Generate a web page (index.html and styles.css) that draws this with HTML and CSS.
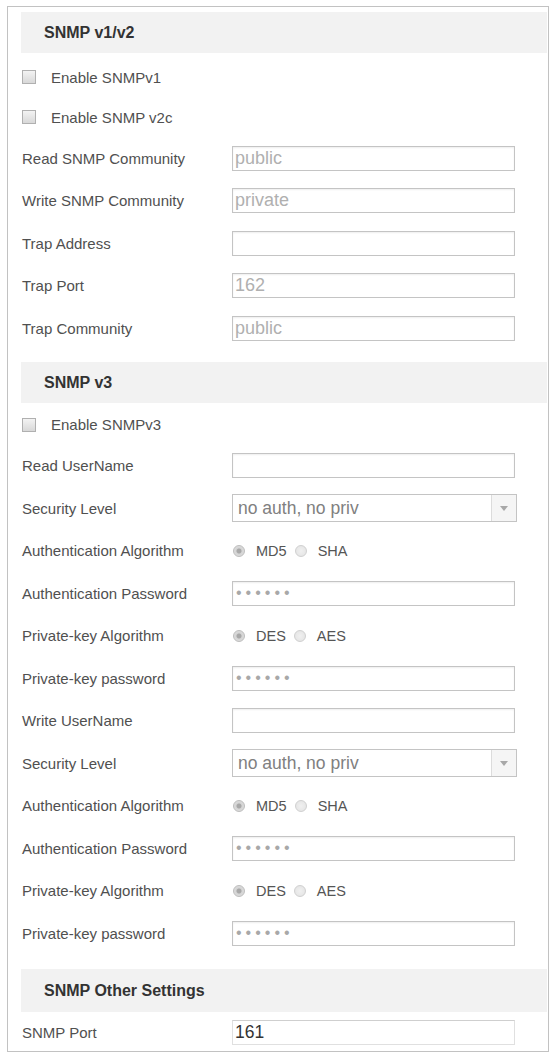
FILE: index.html
```html
<!DOCTYPE html>
<html lang="en">
<head>
    <meta charset="UTF-8">
    <meta name="viewport" content="width=device-width, initial-scale=1.0">
    <title>SNMP Settings</title>
    <link rel="stylesheet" href="styles.css">
</head>
<body>
    <div class="panel">
        <div class="section-title first">SNMP v1/v2</div>
        <div class="checks">
            <label class="check-row"><input type="checkbox" class="check"><span>Enable SNMPv1</span></label>
            <label class="check-row"><input type="checkbox" class="check"><span>Enable SNMP v2c</span></label>
        </div>
        <div class="field-row">
            <span class="label">Read SNMP Community</span>
            <input class="text muted" type="text" value="public">
        </div>
        <div class="field-row">
            <span class="label">Write SNMP Community</span>
            <input class="text muted" type="text" value="private">
        </div>
        <div class="field-row">
            <span class="label">Trap Address</span>
            <input class="text" type="text" value="">
        </div>
        <div class="field-row">
            <span class="label">Trap Port</span>
            <input class="text muted" type="text" value="162">
        </div>
        <div class="field-row">
            <span class="label">Trap Community</span>
            <input class="text muted" type="text" value="public">
        </div>

        <div class="section-title">SNMP v3</div>
        <div class="checks v3">
            <label class="check-row"><input type="checkbox" class="check"><span>Enable SNMPv3</span></label>
        </div>
        <div class="field-row">
            <span class="label">Read UserName</span>
            <input class="text" type="text" value="">
        </div>
        <div class="field-row">
            <span class="label">Security Level</span>
            <div class="select">
                <span class="select-value">no auth, no priv</span>
                <span class="select-arrow"><svg width="8" height="5" viewBox="0 0 8 5"><path d="M0 0h8L4 5z" fill="#a8a8a8"/></svg></span>
            </div>
        </div>
        <div class="field-row">
            <span class="label">Authentication Algorithm</span>
            <div class="radios">
                <input type="radio" class="radio" name="auth1" checked><span class="radio-text">MD5</span>
                <input type="radio" class="radio" name="auth1"><span class="radio-text">SHA</span>
            </div>
        </div>
        <div class="field-row">
            <span class="label">Authentication Password</span>
            <input class="text pass" type="password" value="123456">
        </div>
        <div class="field-row">
            <span class="label">Private-key Algorithm</span>
            <div class="radios">
                <input type="radio" class="radio" name="priv1" checked><span class="radio-text">DES</span>
                <input type="radio" class="radio" name="priv1"><span class="radio-text">AES</span>
            </div>
        </div>
        <div class="field-row">
            <span class="label">Private-key password</span>
            <input class="text pass" type="password" value="123456">
        </div>
        <div class="field-row">
            <span class="label">Write UserName</span>
            <input class="text" type="text" value="">
        </div>
        <div class="field-row">
            <span class="label">Security Level</span>
            <div class="select">
                <span class="select-value">no auth, no priv</span>
                <span class="select-arrow"><svg width="8" height="5" viewBox="0 0 8 5"><path d="M0 0h8L4 5z" fill="#a8a8a8"/></svg></span>
            </div>
        </div>
        <div class="field-row">
            <span class="label">Authentication Algorithm</span>
            <div class="radios">
                <input type="radio" class="radio" name="auth2" checked><span class="radio-text">MD5</span>
                <input type="radio" class="radio" name="auth2"><span class="radio-text">SHA</span>
            </div>
        </div>
        <div class="field-row">
            <span class="label">Authentication Password</span>
            <input class="text pass" type="password" value="123456">
        </div>
        <div class="field-row">
            <span class="label">Private-key Algorithm</span>
            <div class="radios">
                <input type="radio" class="radio" name="priv2" checked><span class="radio-text">DES</span>
                <input type="radio" class="radio" name="priv2"><span class="radio-text">AES</span>
            </div>
        </div>
        <div class="field-row">
            <span class="label">Private-key password</span>
            <input class="text pass" type="password" value="123456">
        </div>

        <div class="section-title other">SNMP Other Settings</div>
        <div class="field-row port-row">
            <span class="label">SNMP Port</span>
            <input class="text port" type="text" value="161">
        </div>
    </div>
</body>
</html>
```

FILE: styles.css
```css
body {
    margin: 0;
    padding: 6px 7px 0;
    background-color: #fff;
    font-family: "Liberation Sans", Arial, sans-serif;
    color: #4a4a4a;
}
.panel {
    border: 1px solid #c2c2c2;
    padding: 5px 1px 0 13px;
}
.section-title {
    height: 41px;
    line-height: 41px;
    padding-left: 23px;
    margin-top: 12px;
    background-color: #f2f2f2;
    font-size: 16px;
    font-weight: bold;
    color: #333;
}
.section-title.first {
    margin-top: 0;
}
.section-title.other {
    margin-top: 14px;
    height: 43px;
    line-height: 43px;
}
.checks {
    padding-top: 4px;
}
.checks.v3 {
    padding-top: 2px;
}
.check-row {
    display: flex;
    align-items: center;
    gap: 15px;
    height: 40px;
    padding-left: 1px;
    font-size: 15px;
    color: #505050;
}
.check {
    appearance: none;
    margin: 0;
    width: 14px;
    height: 14px;
    border: 1px solid #b0b0b0;
    background: linear-gradient(#f3f3f3, #d8d8d8);
}
.field-row {
    display: grid;
    grid-template-columns: 210px 285px;
    align-items: center;
    height: 42.5px;
    padding-left: 1px;
}
.label {
    font-size: 15px;
    color: #505050;
    white-space: nowrap;
}
.text {
    box-sizing: border-box;
    width: 283px;
    height: 25px;
    margin: 0;
    padding: 0 2px;
    border: 1px solid #c4c4c4;
    box-shadow: inset 0 1px 2px rgba(0, 0, 0, 0.07);
    background-color: #fff;
    font-family: "Liberation Sans", Arial, sans-serif;
    font-size: 18px;
    color: #555;
    outline: none;
}
.text.muted {
    color: #b0b0b0;
}
.text.pass {
    font-size: 16px;
    letter-spacing: 4px;
    color: #a8a8a8;
    padding-left: 3px;
}
.select {
    box-sizing: border-box;
    display: flex;
    width: 285px;
    height: 28px;
    border: 1px solid #c4c4c4;
    background-color: #fff;
}
.select-value {
    flex: 1;
    padding-left: 5px;
    line-height: 26px;
    font-size: 17.5px;
    color: #808080;
}
.select-arrow {
    display: flex;
    align-items: center;
    justify-content: center;
    width: 24px;
    border-left: 1px solid #dcdcdc;
    background-color: #f5f5f5;
}
.radios {
    display: flex;
    align-items: center;
    padding-left: 1px;
}
.radio {
    appearance: none;
    margin: 0 11px 0 0;
    width: 12px;
    height: 12px;
    border-radius: 50%;
    border: 1px solid #d0d0d0;
    background: radial-gradient(circle, #f0f0f0 0, #e2e2e2 100%);
}
.radio:checked {
    background: radial-gradient(circle, #a8a8a8 0, #a8a8a8 2px, #d4d4d4 3px, #e2e2e2 100%);
    border-color: #bdbdbd;
}
.radio-text {
    font-size: 14.5px;
    color: #555;
    margin-right: 8px;
}
.port-row {
    height: 36px;
    padding-top: 3px;
}
.text.port {
    border-color: #e0e0e0;
    border-top-color: #cfcfcf;
    box-shadow: none;
    font-size: 17.5px;
    color: #333;
}
```
